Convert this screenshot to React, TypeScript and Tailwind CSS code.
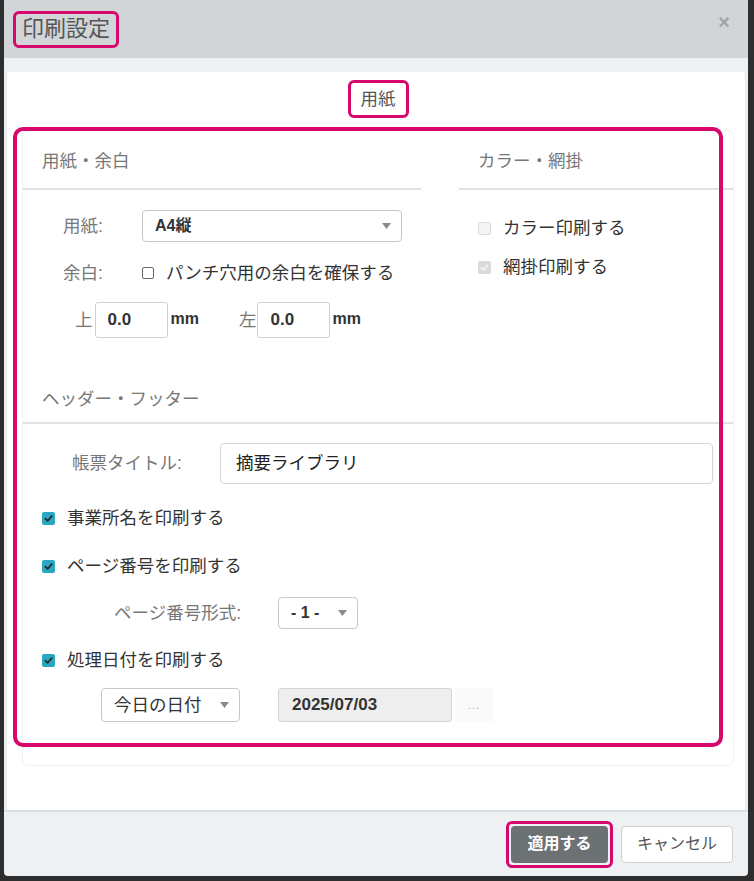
import React from 'react';

const FONT = { fontFamily: "'Liberation Sans', 'Noto Sans CJK JP', sans-serif" };

type BoxState = 'checked' | 'unchecked' | 'disabled' | 'disabledChecked';

const Check: React.FC<{ state: BoxState }> = ({ state }) => {
    if (state === 'unchecked') {
        return <span className="inline-block w-[12px] h-[12px] border border-[#666] rounded-[2px] bg-white" />;
    }
    if (state === 'disabled') {
        return <span className="inline-block w-[13px] h-[13px] border border-[#dcdcdc] rounded-[2px] bg-[#f4f4f4]" />;
    }
    const on = state === 'checked';
    return (
        <span
            className={
                on
                    ? 'inline-flex items-center justify-center w-[13px] h-[13px] rounded-[2px] bg-[#27a8c0]'
                    : 'inline-flex items-center justify-center w-[13px] h-[13px] rounded-[2px] bg-[#dadada]'
            }
        >
            <svg width="11" height="11" viewBox="0 0 12 12">
                <path
                    d="M2.5 6.2 L5 8.6 L9.6 3.4"
                    fill="none"
                    stroke={on ? '#2b2b2b' : '#f2f2f2'}
                    strokeWidth="2"
                    strokeLinecap="round"
                    strokeLinejoin="round"
                />
            </svg>
        </span>
    );
};

const Caret = () => (
    <svg width="9" height="6" viewBox="0 0 9 6" className="shrink-0">
        <path d="M0 0 L9 0 L4.5 6 Z" fill="#8a8a8a" />
    </svg>
);

const Select: React.FC<{ value: string; className: string; bold?: boolean }> = ({ value, className, bold }) => (
    <div
        className={`flex items-center justify-between border border-[#c8c8c8] rounded-[4px] bg-white pl-[12px] pr-[10px] ${className}`}
    >
        <span className={bold ? 'text-[16px] font-bold text-[#333]' : 'text-[17.5px] text-[#333]'}>{value}</span>
        <Caret />
    </div>
);

const CheckRow: React.FC<{ state: BoxState; label: string; className?: string }> = ({ state, label, className }) => (
    <div className={`flex items-center ${className ?? ''}`}>
        <Check state={state} />
        <span className="ml-[12px] text-[17.5px] text-[#333] leading-[24px]">{label}</span>
    </div>
);

const SectionHead: React.FC<{ title: string; className?: string }> = ({ title, className }) => (
    <div className={`pl-[19px] border-b-2 border-[#e2e2e2] ${className ?? ''}`}>
        <span className="text-[17.5px] leading-[24px] text-[#777]">{title}</span>
    </div>
);

export default function App() {
    return (
        <div className="w-[754px] h-[881px] bg-[#2e2e2e] pl-[4px] pr-[6px] pb-[5px]" style={FONT}>
            <div className="w-full h-full bg-[#eef1f4] rounded-b-[4px] flex flex-col overflow-hidden">
                {/* header */}
                <div className="h-[58px] shrink-0 bg-[#d1d5d8] flex items-center justify-between pl-[9px] pr-[18px]">
                    <div className="border-[3px] border-[#d6086b] rounded-[6px] px-[6px] h-[37px] flex items-center">
                        <span className="text-[22px] text-[#555] leading-none">印刷設定</span>
                    </div>
                    <span className="self-start mt-[12px] text-[20px] font-bold text-[#a3a3a3] leading-none">×</span>
                </div>

                {/* body */}
                <div className="pt-[14px] px-[2px]">
                    <div className="relative h-[738px] bg-white rounded-t-[4px] border-x border-[#e6e8ea] pl-[15px] pr-[11px]">
                        <div className="flex justify-center pt-[8px]">
                            <div className="border-[3px] border-[#d6086b] rounded-[6px] w-[61px] h-[38px] flex items-center justify-center">
                                <span className="text-[17.5px] text-[#555]">用紙</span>
                            </div>
                        </div>

                        <div className="mt-[12px] h-[636px] border border-[#f0f0f0] rounded-[6px]">
                            <div className="flex gap-[38px]">
                                {/* paper & margins */}
                                <div className="w-[398px]">
                                    <SectionHead title="用紙・余白" className="pt-[18px] pb-[14px]" />
                                    <div className="flex items-center mt-[20px] h-[32px]">
                                        <span className="w-[79px] pl-[40px] text-[17.5px] text-[#777] shrink-0 box-content">用紙:</span>
                                        <Select value="A4縦" className="w-[260px] h-[32px]" bold />
                                    </div>
                                    <div className="flex items-center mt-[19px] h-[24px]">
                                        <span className="w-[79px] pl-[40px] text-[17.5px] text-[#777] shrink-0 box-content">余白:</span>
                                        <Check state="unchecked" />
                                        <span className="ml-[12px] text-[17.5px] text-[#333]">パンチ穴用の余白を確保する</span>
                                    </div>
                                    <div className="flex items-center mt-[17px] h-[36px] pl-[52px]">
                                        <span className="text-[17.5px] text-[#777]">上</span>
                                        <div className="ml-[2px] w-[73px] h-[36px] border border-[#d0d0d0] rounded-[3px] flex items-center pl-[12px]">
                                            <span className="text-[17px] font-bold text-[#333]">0.0</span>
                                        </div>
                                        <span className="ml-[3px] -mt-[3px] text-[16px] font-bold text-[#333]">mm</span>
                                        <span className="ml-[40px] text-[17.5px] text-[#777]">左</span>
                                        <div className="ml-[1px] w-[73px] h-[36px] border border-[#d0d0d0] rounded-[3px] flex items-center pl-[12px]">
                                            <span className="text-[17px] font-bold text-[#333]">0.0</span>
                                        </div>
                                        <span className="ml-[2px] -mt-[3px] text-[16px] font-bold text-[#333]">mm</span>
                                    </div>
                                </div>

                                {/* colour */}
                                <div className="flex-1">
                                    <SectionHead title="カラー・網掛" className="pt-[18px] pb-[14px]" />
                                    <CheckRow state="disabled" label="カラー印刷する" className="pl-[19px] mt-[26px]" />
                                    <CheckRow state="disabledChecked" label="網掛印刷する" className="pl-[19px] mt-[15px]" />
                                </div>
                            </div>

                            {/* header / footer */}
                            <SectionHead title="ヘッダー・フッター" className="mt-[29px] pt-[20px] pb-[10px]" />
                            <div className="flex items-center mt-[19px] h-[41px]">
                                <span className="pl-[49px] w-[197px] shrink-0 text-[17.5px] text-[#777]">帳票タイトル:</span>
                                <div className="w-[493px] h-[41px] border border-[#d4d4d4] rounded-[4px] flex items-center pl-[15px]">
                                    <span className="text-[17.5px] text-[#222]">摘要ライブラリ</span>
                                </div>
                            </div>
                            <CheckRow state="checked" label="事業所名を印刷する" className="pl-[19px] mt-[22px]" />
                            <CheckRow state="checked" label="ページ番号を印刷する" className="pl-[19px] mt-[24px]" />
                            <div className="flex items-center mt-[19px] h-[32px]">
                                <span className="w-[218px] shrink-0 text-right text-[17.5px] text-[#777]">ページ番号形式:</span>
                                <Select value="- 1 -" className="ml-[37px] w-[80px] h-[32px]" bold />
                            </div>
                            <CheckRow state="checked" label="処理日付を印刷する" className="pl-[19px] mt-[19px]" />
                            <div className="flex items-center mt-[16px] pl-[78px]">
                                <Select value="今日の日付" className="w-[139px] h-[34px]" />
                                <div className="ml-[38px] w-[174px] h-[34px] bg-[#eeeeee] border border-[#d4d4d4] rounded-[3px] flex items-center pl-[13px]">
                                    <span className="text-[17px] font-bold text-[#333]">2025/07/03</span>
                                </div>
                                <div className="ml-[3px] w-[38px] h-[34px] bg-[#fafafa] flex items-center justify-center">
                                    <span className="text-[11px] text-[#aaa] tracking-[1px]">...</span>
                                </div>
                            </div>
                        </div>

                        {/* annotation overlay */}
                        <div className="absolute left-[6px] top-[55px] w-[710px] h-[620px] border-4 border-[#d6086b] rounded-[10px] pointer-events-none" />
                    </div>
                </div>

                {/* footer */}
                <div className="flex-1 border-t-2 border-[#dcdfe2] flex items-center justify-end pr-[15px] gap-[8px]">
                    <div className="border-[3px] border-[#d6086b] rounded-[6px] p-[2px]">
                        <div className="w-[97px] h-[37px] bg-[#6c7174] rounded-[4px] flex items-center justify-center">
                            <span className="text-[16px] font-bold text-white">適用する</span>
                        </div>
                    </div>
                    <div className="w-[112px] h-[37px] bg-white border border-[#cfcfcf] rounded-[4px] flex items-center justify-center">
                        <span className="text-[16px] text-[#555]">キャンセル</span>
                    </div>
                </div>
            </div>
        </div>
    );
}
